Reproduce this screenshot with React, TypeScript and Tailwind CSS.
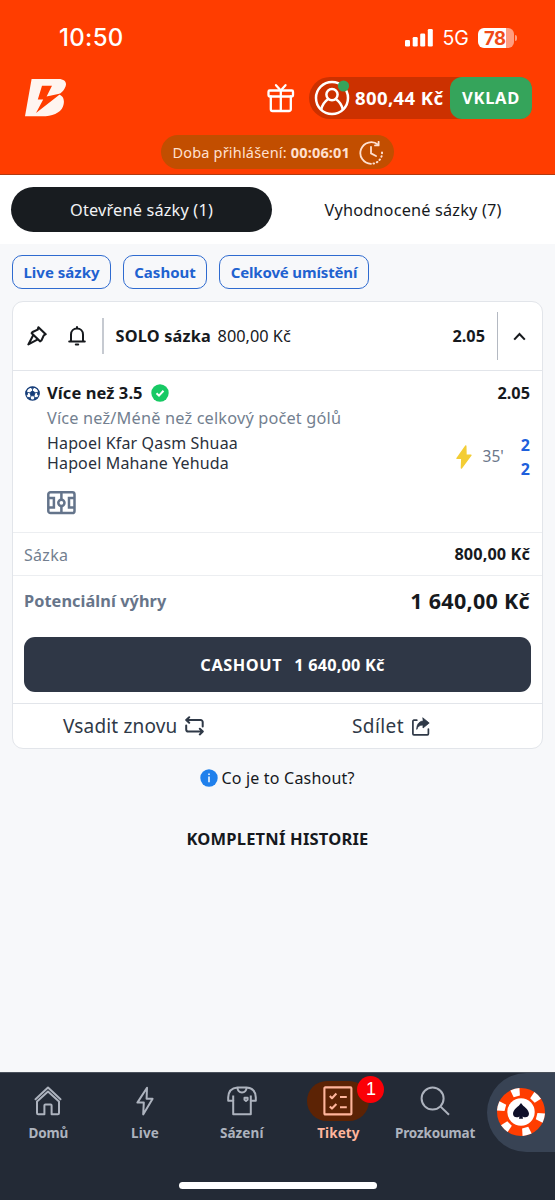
import type { ReactNode } from 'react';

interface NavItemProps {
  label: string;
  labelClass: string;
  active?: boolean;
  badge?: number;
  children: ReactNode;
}

function SignalIcon() {
  return (
    <svg width="28" height="18" viewBox="0 0 28 18" fill="#fff" aria-hidden>
      <rect x="0" y="11" width="5" height="6.5" rx="1.3" />
      <rect x="7.7" y="8" width="5" height="9.5" rx="1.3" />
      <rect x="15.2" y="4.5" width="5" height="13" rx="1.3" />
      <rect x="22.8" y="0" width="5" height="17.5" rx="1.3" />
    </svg>
  );
}

function Logo() {
  return (
    <svg width="42" height="38" viewBox="0 0 42 38" aria-hidden>
      <path
        d="M6.6 0H33.5C41 0 42.6 5 39.6 9.6C38.4 12 36.4 14 33.6 15.6C38.8 16.6 40 22.4 38 27.4C35.2 34.2 27 37.3 17 37.3H0Z"
        fill="#fff5f0"
      />
      <path d="M17 6.8H27L21.6 17.6L35.5 14.4L33.4 16.6L11 34L18.2 20.4H12.8Z" fill="#ff3d00" />
    </svg>
  );
}

function GiftIcon() {
  return (
    <svg width="28" height="30" viewBox="0 0 28 30" fill="none" stroke="#fff" strokeWidth="2.3" strokeLinejoin="round" strokeLinecap="round" aria-hidden>
      <rect x="1.5" y="7.5" width="24.5" height="6" rx="1.2" />
      <path d="M3.8 13.5V26.2a1.8 1.8 0 0 0 1.8 1.8H22a1.8 1.8 0 0 0 1.8-1.8V13.5M13.8 7.5V28M13.5 7.2L9 2.2M14 7.2L18.5 2.2" />
    </svg>
  );
}

function UserIcon() {
  return (
    <svg width="36" height="36" viewBox="0 0 36 36" fill="none" stroke="#fff" strokeWidth="2.5" aria-hidden>
      <circle cx="18" cy="18" r="16" />
      <circle cx="18" cy="14.6" r="5.6" />
      <path d="M7.2 29.6C8.5 23.6 11.6 20.8 14.2 19M28.8 29.6C27.5 23.6 24.4 20.8 21.8 19" />
      <circle cx="29.5" cy="6" r="5.6" fill="#35a45b" stroke="none" />
    </svg>
  );
}

function TimerIcon() {
  return (
    <svg width="24" height="24" viewBox="0 0 24 24" fill="none" stroke="#ffe0d0" strokeWidth="1.8" strokeLinecap="round" aria-hidden>
      <path d="M19.2 3.8A10.8 10.8 0 1 0 12 22.8" />
      <path d="M14.5 22.6A10.8 10.8 0 0 0 22.6 9" strokeDasharray="0.6 3" strokeWidth="2" />
      <path d="M19.6 0.8V4.4H16M12 5.8V12.4L17 15" strokeLinejoin="round" />
    </svg>
  );
}

function PinIcon() {
  return (
    <svg width="20" height="20" viewBox="0 0 20 20" fill="none" stroke="#16191d" strokeWidth="2.1" strokeLinejoin="round" aria-hidden>
      <path d="M11.4 1.2L18.7 8.2L16.8 9.4L14.5 14.4L13 15.3L4.7 7.2L5.6 6L10.7 3.6Z" />
      <path d="M6.3 9L1.4 18.4L10.8 13.3" />
    </svg>
  );
}

function BellIcon() {
  return (
    <svg width="18" height="20" viewBox="0 0 18 20" fill="none" stroke="#16191d" strokeWidth="2" strokeLinejoin="round" strokeLinecap="round" aria-hidden>
      <path d="M1.2 15.6H16.8M3 15.4V8.6C3 5 5.6 2.6 9 2.6S15 5 15 8.6V15.4M9 1V2.4" />
      <path d="M7.8 18.4H10.2" />
    </svg>
  );
}

function BallIcon() {
  return (
    <svg width="15" height="15" viewBox="0 0 15 15" aria-hidden>
      <circle cx="7.5" cy="7.5" r="6.7" fill="#fff" stroke="#143c78" strokeWidth="1.2" />
      <g fill="#143c78" stroke="#143c78" strokeWidth="0.8">
        <path d="M7.5 4.8L10.1 6.7L9.1 9.8H5.9L4.9 6.7Z" />
        <path d="M5.2 1.3H9.8L7.5 2.8ZM1 5.2L2.8 6.4L2.2 9L1 8.6ZM14 5.2L12.2 6.4L12.8 9L14 8.6ZM3.2 11.4L5.4 11.8L5.8 13.8ZM11.8 11.4L9.6 11.8L9.2 13.8Z" />
        <path d="M7.5 2.8V4.8M2.8 6.4L4.9 6.7M12.2 6.4L10.1 6.7M5.4 11.8L5.9 9.8M9.6 11.8L9.1 9.8" fill="none" />
      </g>
    </svg>
  );
}

function PitchIcon() {
  return (
    <svg width="29" height="24" viewBox="0 0 29 24" fill="none" stroke="#64748b" strokeWidth="2.5" aria-hidden>
      <rect x="1.3" y="1.3" width="26.2" height="20.8" rx="2.2" />
      <path d="M14.4 1.5V22M1.5 7H6.9V16.4H1.5M27.5 7H22V16.4H27.5" />
      <circle cx="14.4" cy="11.8" r="3.1" fill="#fff" />
    </svg>
  );
}

function RepeatIcon() {
  return (
    <svg width="19" height="20" viewBox="0 0 19 20" fill="none" stroke="#2f3947" strokeWidth="2" strokeLinejoin="round" strokeLinecap="round" aria-hidden>
      <path d="M4.2 1.2L1.2 4L4.2 6.8M1.6 4H15.6a2.1 2.1 0 0 1 2.1 2.1V10.5" />
      <path d="M14.8 12.8L17.8 15.6L14.8 18.4M17.4 15.6H3.3a2.1 2.1 0 0 1-2.1-2.1V9.6" />
    </svg>
  );
}

function ShareIcon() {
  return (
    <svg width="18" height="19" viewBox="0 0 18 19" fill="none" stroke="#2f3947" strokeWidth="1.7" strokeLinejoin="round" strokeLinecap="round" aria-hidden>
      <path d="M4.8 3.2H1.9a1 1 0 0 0-1 1V16.8a1 1 0 0 0 1 1H15.4a1 1 0 0 0 1-1V12" />
      <path d="M11 1L17.2 6L11 11V8C7.6 8 5.8 9.4 4.8 12.4C4.6 7.6 7 4.3 11 4Z" fill="#2f3947" strokeWidth="0.8" />
    </svg>
  );
}

function ChipIcon() {
  const wedges = [-15, 45, 105, 165, 225, 285];
  return (
    <svg width="48" height="48" viewBox="0 0 48 48" aria-hidden>
      <circle cx="24" cy="24" r="24" fill="#ff3d00" />
      {wedges.map((deg) => (
        <path key={deg} d="M19.3 0.4Q24 -0.4 28.7 0.4L27.2 7.8H20.8Z" fill="#fff" transform={`rotate(${deg} 24 24)`} />
      ))}
      <circle cx="24" cy="24" r="13.7" fill="#fff" />
      <path
        d="M24 15C26.2 18.8 32 21.2 32 25.8C32 29.4 28 30.2 25.6 28.4L26 30.8H22L22.4 28.4C20 30.2 16 29.4 16 25.8C16 21.2 21.8 18.8 24 15Z"
        fill="#0f1029"
      />
    </svg>
  );
}

function FilterChip({ children }: { children: ReactNode }) {
  return (
    <button
      type="button"
      className="flex h-[34px] items-center justify-center rounded-[10px] border-[1.5px] border-[#2f6bd0] text-[15px] font-bold text-[#1f62d0]"
    >
      {children}
    </button>
  );
}

function NavItem({ label, labelClass, active = false, badge, children }: NavItemProps) {
  return (
    <div className="flex w-[96.7px] flex-col items-center">
      <div
        className={`relative flex h-10 w-[62px] items-center justify-center rounded-full ${
          active ? 'bg-[#5c2305]' : ''
        }`}
      >
        {children}
        {badge !== undefined && (
          <span className="absolute -top-[5px] left-[50px] flex size-[27px] items-center justify-center rounded-full bg-[#fb0007] font-['Liberation_Sans'] text-[18px] text-white">
            {badge}
          </span>
        )}
      </div>
      <span
        className={`mt-[3px] whitespace-nowrap text-[13.5px] leading-[18px] font-bold ${labelClass} ${
          active ? 'text-[#ffb59c]' : 'text-[#adb3be]'
        }`}
      >
        {label}
      </span>
    </div>
  );
}

function Header() {
  return (
    <header className="flex h-[175px] flex-col border-b border-[#b23a10] bg-[#ff3d00] text-white">
      <div className="flex h-[75px] shrink-0 items-center justify-between pr-[39px] pl-[59px] font-['Inter',sans-serif]">
        <span className="text-[24px] font-medium tracking-[0.3px]">10:50</span>
        <div className="flex items-center">
          <SignalIcon />
          <span className="ml-[9px] pt-[2px] text-[19.5px] tracking-[0.1px]">5G</span>
          <div className="ml-[9px] flex h-5 w-[36px] items-center overflow-hidden rounded-[6px] bg-[linear-gradient(90deg,#fff_78%,#ff9d80_78%)] pl-[6px] text-[18.5px] leading-5 font-bold tracking-[-0.5px] text-[#f04a18]">
            78
          </div>
          <span className="mr-[-1px] ml-px h-[6px] w-[2px] rounded-r-full bg-[#ff9d80]" />
        </div>
      </div>
      <div className="mt-[2px] flex h-[42px] shrink-0 items-center pr-[23px] pl-[25px]">
        <Logo />
        <div className="ml-auto"><GiftIcon /></div>
        <div className="ml-[14px] flex h-[42px] w-[223px] items-center rounded-[21px] rounded-r-[13px] bg-[#cc3100]">
          <div className="ml-[5px]"><UserIcon /></div>
          <span className="ml-[5px] w-[89px] whitespace-nowrap text-[18.5px] font-bold tracking-[0.4px]">800,44 Kč</span>
          <button type="button" className="ml-auto h-[42px] w-[82px] rounded-[12px] bg-[#35a45b] pt-px text-[16.5px] font-bold tracking-[0.7px]">
            VKLAD
          </button>
        </div>
      </div>
      <div className="mt-[16px] ml-[161px] flex h-[34px] w-[233px] shrink-0 items-center rounded-full bg-[#c24e00] pt-px pl-[11.5px] text-[14.5px] tracking-[0.18px] text-[#ffe0d0]">
        <span className="whitespace-nowrap">Doba přihlášení: <b className="font-bold">00:06:01</b></span>
        <div className="mr-[11px] ml-auto"><TimerIcon /></div>
      </div>
    </header>
  );
}

function BetCard() {
  return (
    <section className="mx-3 mt-3 flex h-[448px] flex-col rounded-[11px] border-[1.5px] border-[#e2e5ea] bg-white">
      <div className="flex h-[69px] items-center border-b-[1.5px] border-[#e2e5ea] pl-[14px]">
        <PinIcon />
        <div className="ml-[21px]"><BellIcon /></div>
        <span className="ml-[16px] h-9 w-[1.5px] bg-[#c6cad1]" />
        <b className="ml-[12px] text-[16.3px] font-bold tracking-[0.2px]">SOLO sázka</b>
        <span className="ml-[6.5px] text-[16.3px] tracking-[0.02px]">800,00 Kč</span>
        <b className="mr-[12px] ml-auto text-[16.3px] font-bold">2.05</b>
        <span className="h-12 w-px bg-[#b4b9c2]" />
        <svg className="mr-[16px] ml-[15px]" width="13" height="9" viewBox="0 0 13 9" fill="none" stroke="#16191d" strokeWidth="2.1" aria-hidden>
          <path d="M1.2 7.6L6.5 2L11.8 7.6" />
        </svg>
      </div>

      <div className="flex h-[162px] flex-col border-b-[1.5px] border-[#eceef1] pt-[10px] pr-[12px] pl-[12px]">
        <div className="flex h-6 items-center">
          <BallIcon />
          <b className="ml-[7px] text-[16.5px] font-bold tracking-[0.08px]">Více než 3.5</b>
          <svg className="ml-[8px]" width="18" height="18" viewBox="0 0 18 18" aria-hidden>
            <circle cx="9" cy="9" r="8.7" fill="#17c964" />
            <path d="M5.5 9.2L8 11.6L12.5 6.8" fill="none" stroke="#fff" strokeWidth="2" />
          </svg>
          <b className="ml-auto text-[16.3px] font-bold">2.05</b>
        </div>
        <p className="ml-[22px] h-[27px] text-[16.3px] leading-[27px] tracking-[0.18px] whitespace-nowrap text-[#737f90]">
          Více než/Méně než celkový počet gólů
        </p>
        <div className="ml-[22px] flex h-[48px] items-start text-[16px] leading-[19.5px] text-[#2a313c]">
          <div className="pt-[2px] tracking-[0.15px]">
            <p>Hapoel Kfar Qasm Shuaa</p>
            <p>Hapoel Mahane Yehuda</p>
          </div>
          <div className="ml-auto flex items-center pt-px">
            <svg width="16" height="24" viewBox="0 0 16 24" fill="#f3cd35" stroke="#f3cd35" strokeWidth="1.4" strokeLinejoin="round" aria-hidden>
              <path d="M9.8 1L1 13.4H5.8L5.4 23L15 10.2H10Z" />
            </svg>
            <span className="mr-[17px] ml-[11px] text-[15.5px] text-[#6b778a]">35'</span>
            <div className="flex flex-col text-[16px] leading-6 font-bold text-[#1e5fdc]">
              <span>2</span>
              <span>2</span>
            </div>
          </div>
        </div>
        <div className="mt-[11px] ml-[22px]"><PitchIcon /></div>
      </div>

      <div className="flex h-[43px] items-center justify-between border-b-[1.5px] border-[#eceef1] pt-px pr-[12px] pl-[11px]">
        <span className="text-[16px] tracking-[0.3px] text-[#737f90]">Sázka</span>
        <b className="text-[16.3px] font-bold tracking-[0.1px]">800,00 Kč</b>
      </div>
      <div className="flex h-[51px] items-center justify-between pr-[12px] pl-[11px]">
        <span className="text-[16.3px] font-bold tracking-[0.08px] text-[#67758a]">Potenciální výhry</span>
        <b className="text-[21.5px] font-bold tracking-[0.3px]">1 640,00 Kč</b>
      </div>
      <button
        type="button"
        className="mt-[10px] mr-[11.5px] ml-[10.5px] flex h-[55px] shrink-0 items-center justify-center gap-3 rounded-[11px] bg-[#2f3746] pt-px pl-[31px] text-[16.3px] font-bold text-white"
      >
        <span className="tracking-[0.6px]">CASHOUT</span>
        <span className="tracking-[0.2px]">1 640,00 Kč</span>
      </button>
      <div className="mt-[11px] flex flex-1 items-center border-t-[1.5px] border-[#e2e5ea] text-[19px] text-[#2f3947]">
        <div className="ml-[50px] flex w-[289px] items-center gap-[8px] tracking-[0.15px]">
          <span className="whitespace-nowrap">Vsadit znovu</span>
          <RepeatIcon />
        </div>
        <div className="flex items-center gap-[8px] tracking-[0.4px]">
          <span>Sdílet</span>
          <ShareIcon />
        </div>
      </div>
    </section>
  );
}

function BottomNav() {
  return (
    <nav className="flex h-32 flex-col border-t border-[#4a515c] bg-[#232a36]">
      <div className="flex h-[79px]">
        <div className="flex w-[487px] pt-[8px]">
          <NavItem label="Domů" labelClass="tracking-[-0.1px]">
            <svg width="28" height="30" viewBox="0 0 28 30" fill="none" stroke="#adb3be" strokeWidth="2" strokeLinejoin="round" strokeLinecap="round" aria-hidden>
              <path d="M1.5 13.2L14 1.6L26.5 13.2" />
              <path d="M3 15.4V27a1.2 1.2 0 0 0 1.2 1.2H10.4V19.6a1 1 0 0 1 1-1h5.2a1 1 0 0 1 1 1v8.6h6.2A1.2 1.2 0 0 0 25 27V15.4L14 5.6Z" />
            </svg>
          </NavItem>
          <NavItem label="Live" labelClass="tracking-[0.2px]">
            <svg width="18" height="30" viewBox="0 0 18 30" fill="none" stroke="#adb3be" strokeWidth="2" strokeLinejoin="round" aria-hidden>
              <path d="M11 1.8L1.4 16.6H7.8L7.2 28.4L16.6 12.8H10.6Z" />
            </svg>
          </NavItem>
          <NavItem label="Sázení" labelClass="tracking-[0.1px]">
            <svg width="30" height="30" viewBox="0 0 30 30" fill="none" stroke="#adb3be" strokeWidth="2" strokeLinejoin="round" aria-hidden>
              <path d="M10.5 1.5C4 2 1.4 5.6 1.2 11.4V14.8H6.2V28.2H23.8V14.8H28.8V11.4C28.6 5.6 26 2 19.5 1.5Z" />
              <path d="M10.4 1.5C10.8 8 19.2 8 19.6 1.5M6.2 9.5V15M23.8 9.5V15" />
              <path d="M17.5 11.8H20.6V13.8L19 15L17.5 13.8Z" />
            </svg>
          </NavItem>
          <NavItem label="Tikety" labelClass="tracking-[0.1px]" active badge={1}>
            <svg width="30" height="30" viewBox="0 0 30 30" fill="none" stroke="#ffb59c" strokeWidth="2.1" strokeLinejoin="round" aria-hidden>
              <rect x="1.4" y="1.4" width="27" height="27" rx="0.8" />
              <path d="M6.8 10L9 12.2L13.4 7.6M17 11H23.8M6.8 20.4L9 22.6L13.4 18M17 21.2H23.8" />
            </svg>
          </NavItem>
          <NavItem label="Prozkoumat" labelClass="tracking-[-0.15px]">
            <svg width="30" height="30" viewBox="0 0 30 30" fill="none" stroke="#adb3be" strokeWidth="2" aria-hidden>
              <circle cx="12.6" cy="12.6" r="11" />
              <path d="M20.6 20.6L29 28.8" />
            </svg>
          </NavItem>
        </div>
        <div className="flex flex-1 items-center rounded-l-[40px] bg-[#384354] pb-[2px] pl-[10px]"><ChipIcon /></div>
      </div>
      <div className="mt-[30px] ml-[179px] h-[7px] w-[198px] rounded-full bg-white" />
    </nav>
  );
}

export default function App() {
  return (
    <div className="flex h-[1200px] w-[555px] flex-col overflow-hidden bg-[#f7f8fa] font-['Noto_Sans','Open_Sans',sans-serif] text-[#16191d]">
      <Header />
      <div className="flex h-[69px] items-start bg-white px-[11px] pt-[12px] text-[16.3px] tracking-[0.18px]">
        <button type="button" className="h-[45px] w-[261px] rounded-full bg-[#181c20] pt-[2px] text-[#f2f3f5]">
          Otevřené sázky (1)
        </button>
        <button type="button" className="h-[45px] flex-1 pt-[2px] pl-[10px]">Vyhodnocené sázky (7)</button>
      </div>
      <div className="mt-[11px] grid grid-cols-[99px_84px_150px] gap-x-3 pl-[12px] whitespace-nowrap">
        <FilterChip>Live sázky</FilterChip>
        <FilterChip>Cashout</FilterChip>
        <FilterChip><span className="tracking-[-0.15px]">Celkové umístění</span></FilterChip>
      </div>
      <BetCard />
      <div className="mt-[17px] flex h-6 items-center justify-center gap-[3px] text-[16px] tracking-[0.2px]">
        <svg width="18" height="18" viewBox="0 0 18 18" aria-hidden>
          <circle cx="9" cy="9" r="8.7" fill="#1f80ec" />
          <path d="M9 7.6V13.2M9 4.4V6" stroke="#fff" strokeWidth="1.5" />
        </svg>
        <span className="whitespace-nowrap">Co je to Cashout?</span>
      </div>
      <h2 className="mt-[37px] text-center text-[16.5px] leading-6 font-bold tracking-[0.2px]">KOMPLETNÍ HISTORIE</h2>
      <div className="flex-1" />
      <BottomNav />
    </div>
  );
}
